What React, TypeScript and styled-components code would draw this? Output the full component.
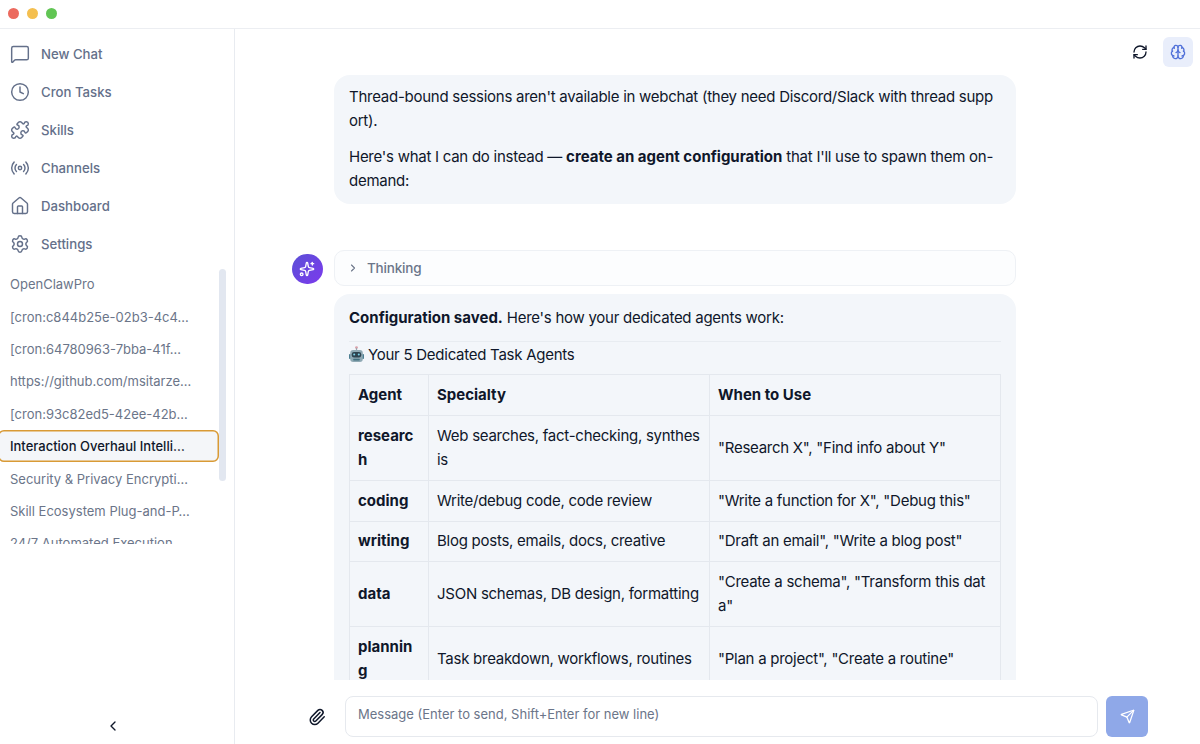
import React from "react";
import styled, { createGlobalStyle } from "styled-components";
import {
  MessageSquare, Clock, Puzzle, Radio, Home, Settings, ChevronLeft, ChevronRight,
  RefreshCw, Brain, Sparkles, Paperclip, Send,
} from "lucide-react";

const Global = createGlobalStyle`
  * { box-sizing: border-box; }
  html, body { margin: 0; padding: 0; height: 100%; background: #fff; }
  body { font-family: Inter, "Liberation Sans", sans-serif; color: #0f172a; overflow: hidden; }
`;

const Shell = styled.div`
  width: 1200px; height: 744px; display: flex; flex-direction: column; overflow: hidden; background: #fff;
`;
const TitleBar = styled.div`
  height: 29px; flex: none; display: flex; align-items: center; gap: 7.5px; padding: 0 0 1px 7.5px;
  border-bottom: 1px solid #eceef2;
`;
const Light = styled.span<{ $c: string }>`
  width: 11.5px; height: 11.5px; border-radius: 50%; background: ${(p) => p.$c};
`;
const Body = styled.div`
  flex: 1; min-height: 0; display: flex;
`;
const Sidebar = styled.aside`
  width: 235px; flex: none; border-right: 1px solid #e8ebf0; display: flex; flex-direction: column; overflow: hidden;
`;
const Nav = styled.nav`
  display: flex; flex-direction: column; padding-top: 6px;
`;
const NavItem = styled.a`
  height: 38px; display: flex; align-items: center; gap: 11px; padding-left: 10px;
  font-size: 13.2px; font-weight: 500; color: #64708a;
`;
const Sessions = styled.div`
  margin-top: 5px; height: 285px; display: flex; align-items: flex-start;
`;
const SessionList = styled.div`
  width: 219px; height: 275.5px; overflow: hidden;
`;
const Session = styled.div<{ $active?: boolean }>`
  height: 32.4px; display: flex; align-items: center; font-size: 13px; white-space: nowrap;
  margin-left: ${(p) => (p.$active ? "-2px" : "0")};
  padding-left: ${(p) => (p.$active ? "12px" : "10px")};
  color: ${(p) => (p.$active ? "#0f172a" : "#6b7589")};
  font-weight: ${(p) => (p.$active ? 500 : 400)};
  background: ${(p) => (p.$active ? "#f4f6f9" : "transparent")};
  border-radius: ${(p) => (p.$active ? "6px" : "0")};
  box-shadow: ${(p) => (p.$active ? "inset 0 0 0 1.5px #d99a35" : "none")};
`;
const Thumb = styled.div`
  width: 7px; height: 212px; margin-top: 1px; border-radius: 4px; background: #e2e7f0;
`;
const CollapseRow = styled.div`
  margin-top: auto; height: 39px; display: flex; justify-content: center; align-items: flex-start; padding: 13px 8px 0 0; color: #0f172a;
`;
const Main = styled.main`
  flex: 1; min-width: 0; display: flex; flex-direction: column;
`;
const TopBar = styled.div`
  height: 46px; flex: none; display: flex; justify-content: flex-end; align-items: flex-start;
  gap: 8px; padding: 8px 7px 0 0;
`;
const IconButton = styled.button<{ $active?: boolean }>`
  width: 30px; height: 30px; border: 0; border-radius: 6px; padding: 0; display: flex; align-items: center; justify-content: center;
  background: ${(p) => (p.$active ? "#e9eefb" : "transparent")};
  color: ${(p) => (p.$active ? "#4f6fd8" : "#0f172a")};
`;
const Messages = styled.div`
  flex: 1; min-height: 0; overflow: hidden; padding-left: 99px; width: 781px;
`;
const Bubble = styled.div<{ $top: number; $bottom: number }>`
  background: #f3f6fa; border-radius: 16px; padding: ${(p) => p.$top}px 15px ${(p) => p.$bottom}px; font-size: 15px; line-height: 24px;
  letter-spacing: -0.26px; word-break: break-all; color: #0f172a; width: 682px;
  strong { letter-spacing: 0; }
`;
const Para = styled.p`
  margin: 0 0 12px; &:last-child { margin-bottom: 0; }
`;
const AgentRow = styled.div`
  position: relative; margin-top: 46px;
`;
const Avatar = styled.div`
  position: absolute; left: -42px; top: 3.5px; width: 30.5px; height: 30.5px; border-radius: 50%;
  background: linear-gradient(135deg, #5b50d6, #7c3aed); color: #fff; display: flex; align-items: center; justify-content: center;
`;
const ThinkingBar = styled.div`
  width: 682px; height: 36px; border: 1px solid #eef1f5; border-radius: 10px; background: #fcfdfe;
  display: flex; align-items: center; gap: 8px; padding-left: 12px; font-size: 13.5px; letter-spacing: -0.2px; font-weight: 500; color: #6b7589; margin-bottom: 8px;
`;
const Divider = styled.hr`
  border: 0; border-top: 1px solid #e8ecf1; margin: 11px 0 0;
`;
const Heading = styled.div`
  display: flex; align-items: center; gap: 4px; height: 24px; margin: 0 0 8px; padding-top: 1px;
`;
const Table = styled.table`
  border-collapse: collapse; table-layout: fixed; width: 651px;
`;
const Th = styled.th<{ $w: number }>`
  width: ${(p) => p.$w}px; border: 1px solid #e4e8ee; padding: 8px; text-align: left; font-weight: 700; height: 41px; letter-spacing: 0;
`;
const Td = styled.td<{ $bold?: boolean }>`
  border: 1px solid #e4e8ee; padding: 7.9px 8px; font-weight: ${(p) => (p.$bold ? 700 : 400)};
  letter-spacing: ${(p) => (p.$bold ? "0" : "-0.26px")};
`;
const Composer = styled.div`
  height: 64px; flex: none; display: flex; align-items: flex-start; padding: 16px 0 0 71px; gap: 8px;
`;
const Clip = styled.div`
  width: 22px; height: 41px; margin-right: 9px; flex: none; display: flex; align-items: center; justify-content: center; color: #0f172a;
`;
const Input = styled.div`
  width: 753px; height: 41px; border: 1px solid #e6e9ee; border-radius: 8px; display: flex; align-items: center;
  padding: 0 12px 6px; font-size: 13px; color: #6b7589;
`;
const SendButton = styled.button`
  width: 42px; height: 41px; border: 0; border-radius: 6px; background: #8fa8e8; color: #fff; padding: 0;
  display: flex; align-items: center; justify-content: center;
`;

const Robot = () => (
  <svg width="15" height="17" viewBox="0 0 15 17" aria-hidden="true">
    <circle cx="7.5" cy="1.6" r="1.4" fill="#d9a0a8" />
    <rect x="6.9" y="2" width="1.2" height="2.5" fill="#9aa6ae" />
    <rect x="0" y="8" width="2" height="5" rx="0.8" fill="#4d7f92" />
    <rect x="13" y="8" width="2" height="5" rx="0.8" fill="#4d7f92" />
    <rect x="1.2" y="4" width="12.6" height="12" rx="3" fill="#8fa9b4" />
    <rect x="2.8" y="6" width="9.4" height="5.4" rx="2.2" fill="#2e4450" />
    <circle cx="5.2" cy="8.6" r="1" fill="#7fd4ea" />
    <circle cx="9.8" cy="8.6" r="1" fill="#7fd4ea" />
    <rect x="4.2" y="12.8" width="6.6" height="1.6" rx="0.6" fill="#41707f" />
  </svg>
);

const navItems = [
  { icon: MessageSquare, label: "New Chat" },
  { icon: Clock, label: "Cron Tasks" },
  { icon: Puzzle, label: "Skills" },
  { icon: Radio, label: "Channels" },
  { icon: Home, label: "Dashboard" },
  { icon: Settings, label: "Settings" },
];
const sessions = [
  "OpenClawPro",
  "[cron:c844b25e-02b3-4c4…",
  "[cron:64780963-7bba-41f…",
  "https://github.com/msitarze…",
  "[cron:93c82ed5-42ee-42b…",
  "Interaction Overhaul Intelli…",
  "Security & Privacy Encrypti…",
  "Skill Ecosystem Plug-and-P…",
  "24/7 Automated Execution",
];
const rows: [string, string, string][] = [
  ["research", "Web searches, fact-checking, synthesis", '"Research X", "Find info about Y"'],
  ["coding", "Write/debug code, code review", '"Write a function for X", "Debug this"'],
  ["writing", "Blog posts, emails, docs, creative", '"Draft an email", "Write a blog post"'],
  ["data", "JSON schemas, DB design, formatting", '"Create a schema", "Transform this data"'],
  ["planning", "Task breakdown, workflows, routines", '"Plan a project", "Create a routine"'],
];

export default function App() {
  return (
    <Shell>
      <Global />
      <TitleBar>
        <Light $c="#ec6a5e" />
        <Light $c="#f4bf4f" />
        <Light $c="#61c554" />
      </TitleBar>
      <Body>
        <Sidebar>
          <Nav>
            {navItems.map(({ icon: Icon, label }) => (
              <NavItem key={label}>
                <Icon size={20} strokeWidth={1.75} />
                {label}
              </NavItem>
            ))}
          </Nav>
          <Sessions>
            <SessionList>
              {sessions.map((s) => (
                <Session key={s} $active={s.startsWith("Interaction")}>{s}</Session>
              ))}
            </SessionList>
            <Thumb />
          </Sessions>
          <CollapseRow>
            <ChevronLeft size={16} strokeWidth={2} />
          </CollapseRow>
        </Sidebar>
        <Main>
          <TopBar>
            <IconButton><RefreshCw size={16} strokeWidth={2} /></IconButton>
            <IconButton $active><Brain size={16} strokeWidth={2} /></IconButton>
          </TopBar>
          <Messages>
            <Bubble $top={10} $bottom={11}>
              <Para>Thread-bound sessions aren't available in webchat (they need Discord/Slack with thread support).</Para>
              <Para>Here's what I can do instead — <strong>create an agent configuration</strong> that I'll use to spawn them on-demand:</Para>
            </Bubble>
            <AgentRow>
              <Avatar><Sparkles size={16} strokeWidth={2} /></Avatar>
              <ThinkingBar>
                <ChevronRight size={12} strokeWidth={2.25} />
                Thinking
              </ThinkingBar>
              <Bubble $top={12} $bottom={12}>
                <div><strong>Configuration saved.</strong> Here's how your dedicated agents work:</div>
                <Divider />
                <Heading><Robot /> Your 5 Dedicated Task Agents</Heading>
                <Table>
                  <thead>
                    <tr>
                      <Th $w={79}>Agent</Th>
                      <Th $w={281}>Specialty</Th>
                      <Th $w={291}>When to Use</Th>
                    </tr>
                  </thead>
                  <tbody>
                    {rows.map(([a, b, c]) => (
                      <tr key={a}>
                        <Td $bold>{a}</Td>
                        <Td>{b}</Td>
                        <Td>{c}</Td>
                      </tr>
                    ))}
                  </tbody>
                </Table>
              </Bubble>
            </AgentRow>
          </Messages>
          <Composer>
            <Clip><Paperclip size={18} strokeWidth={2} /></Clip>
            <Input>Message (Enter to send, Shift+Enter for new line)</Input>
            <SendButton><Send size={15} strokeWidth={2} /></SendButton>
          </Composer>
        </Main>
      </Body>
    </Shell>
  );
}
